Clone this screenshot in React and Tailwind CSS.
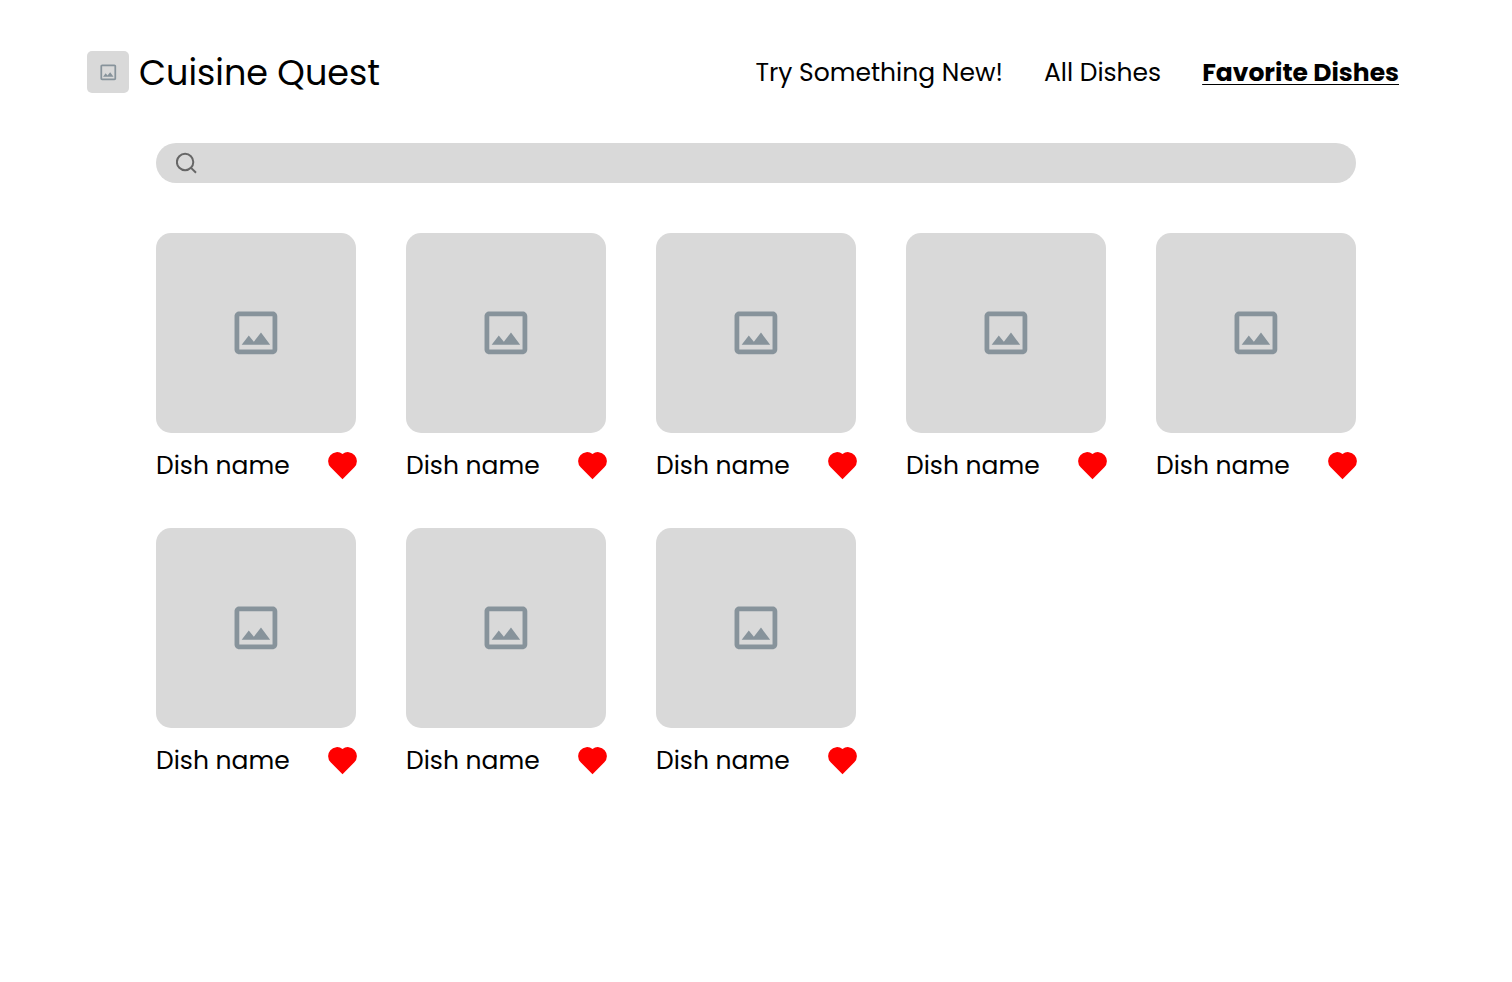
import { useState } from "react";

const navItems = [
  { label: "Try Something New!", href: "#new" },
  { label: "All Dishes", href: "#all" },
  { label: "Favorite Dishes", href: "#favorites", active: true },
];

const initialDishes = Array.from({ length: 8 }, (_, i) => ({
  id: i,
  name: "Dish name",
  favorite: true,
}));

function ImageIcon({ className }) {
  return (
    <svg viewBox="0.25 0.25 24 24" className={className} fill="#87939b" aria-hidden="true">
      <path d="M19 5v14H5V5h14m0-2H5c-1.1 0-2 .9-2 2v14c0 1.1.9 2 2 2h14c1.1 0 2-.9 2-2V5c0-1.1-.9-2-2-2zm-4.86 8.86l-3 3.87L9 13.14 6 17h12l-3.86-5.14z" />
    </svg>
  );
}

function SearchIcon() {
  return (
    <svg viewBox="0 0 22 22" className="size-[22px] shrink-0" fill="none" stroke="#666666" strokeWidth="2" aria-hidden="true">
      <circle cx="9.1" cy="10" r="8.2" />
      <path d="M14.8 15.6l5.2 5.2" />
    </svg>
  );
}

function HeartIcon({ filled }) {
  return (
    <svg viewBox="0 0 29 28" className="h-7 w-[29px]" fill={filled ? "#ff0000" : "none"} stroke={filled ? "none" : "#ff0000"} aria-hidden="true">
      <path d="M2.64 15.36A9 9 0 0 1 14.5 1.9A9 9 0 0 1 26.36 15.36L14.5 27.3Z" />
    </svg>
  );
}

function Header() {
  return (
    <header className="flex items-end justify-between gap-10 pt-[51px] pr-[113px] pl-[87px]">
      <a href="#home" className="flex items-end gap-[10px]">
        <span className="flex size-[42px] items-center justify-center rounded-[5px] bg-[#d9d9d9]">
          <ImageIcon className="size-[21px]" />
        </span>
        <span className="text-[35px] leading-10 whitespace-nowrap">Cuisine Quest</span>
      </a>
      <nav className="flex items-center gap-[41px] text-[25px] leading-10 whitespace-nowrap">
        {navItems.map((item) => (
          <a
            key={item.label}
            href={item.href}
            aria-current={item.active ? "page" : undefined}
            className={
              item.active
                ? "font-bold underline decoration-1 underline-offset-[3px] [text-decoration-skip-ink:none]"
                : ""
            }
          >
            {item.label}
          </a>
        ))}
      </nav>
    </header>
  );
}

function DishCard({ dish, onToggle }) {
  return (
    <li>
      <div className="flex aspect-square items-center justify-center rounded-[15px] bg-[#d9d9d9]">
        <ImageIcon className="size-[57px]" />
      </div>
      <div className="-mr-px flex h-[47px] items-end justify-between">
        <h2 className="text-[25px] leading-7 whitespace-nowrap">{dish.name}</h2>
        <button type="button" aria-label="Favorite" aria-pressed={dish.favorite} onClick={onToggle}>
          <HeartIcon filled={dish.favorite} />
        </button>
      </div>
    </li>
  );
}

export default function App() {
  const [dishes, setDishes] = useState(initialDishes);
  const toggle = (id) =>
    setDishes((list) => list.map((d) => (d.id === id ? { ...d, favorite: !d.favorite } : d)));

  return (
    <div className="min-h-screen bg-white font-[Poppins,Inter,sans-serif] text-black">
      <Header />
      <main className="mx-auto mt-[50px] max-w-[1200px]">
        <label className="flex h-10 items-center gap-3 rounded-full bg-[#d9d9d9] px-5">
          <SearchIcon />
          <input type="search" aria-label="Search dishes" className="h-full flex-1 bg-transparent text-lg outline-none" />
        </label>
        <ul className="mt-[50px] grid grid-cols-5 gap-x-[50px] gap-y-12">
          {dishes.map((dish) => (
            <DishCard key={dish.id} dish={dish} onToggle={() => toggle(dish.id)} />
          ))}
        </ul>
      </main>
    </div>
  );
}
